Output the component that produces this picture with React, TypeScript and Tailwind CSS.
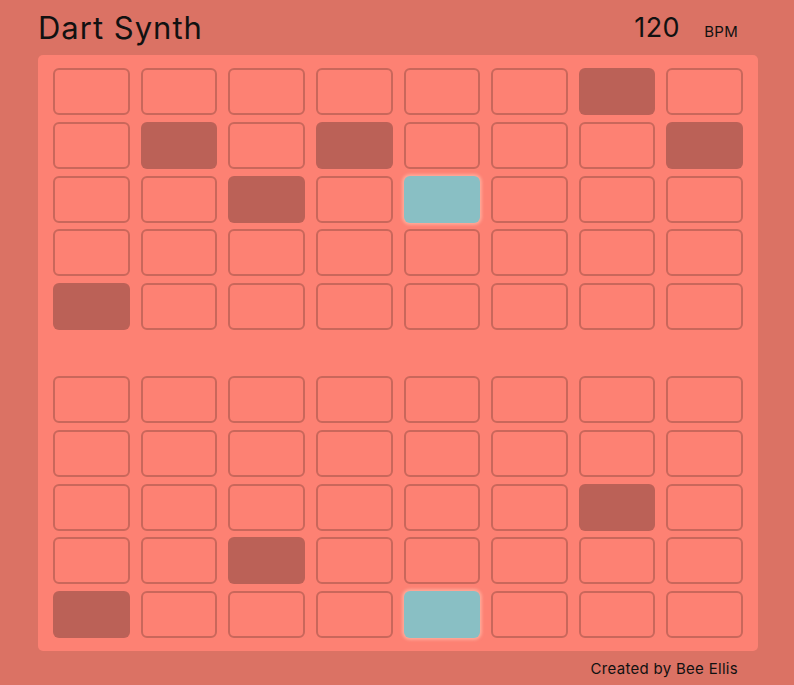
const block1: Record<string, "on" | "play"> = {
  "0-6": "on",
  "1-1": "on",
  "1-3": "on",
  "1-7": "on",
  "2-2": "on",
  "2-4": "play",
  "4-0": "on",
};

const block2: Record<string, "on" | "play"> = {
  "2-6": "on",
  "3-2": "on",
  "4-0": "on",
  "4-4": "play",
};

function Pad({ state }: { state?: "on" | "play" }) {
  if (state === "play") {
    return <div className="h-[47px] rounded-[6px] bg-[#89bfc4] shadow-[0_0_3px_2px_#ffa898]" />;
  }
  if (state === "on") {
    return <div className="h-[47px] rounded-[6px] bg-[#bb6157]" />;
  }
  return <div className="h-[47px] rounded-[6px] border-2 border-[#c9675b] bg-[#fd8173]" />;
}

function Block({ cells }: { cells: Record<string, "on" | "play"> }) {
  return (
    <div className="grid grid-cols-8 gap-x-[11px] gap-y-[6.75px]">
      {[...Array(5)].map((_, r) =>
        [...Array(8)].map((_, c) => <Pad key={`${r}-${c}`} state={cells[`${r}-${c}`]} />)
      )}
    </div>
  );
}

export default function App() {
  return (
    <div
      className="min-h-[685px] w-full bg-[#db7264] text-[#111]"
      style={{ fontFamily: 'Inter, "Noto Sans", sans-serif' }}
    >
      <div className="ml-[38px] w-[720px]">
        <header className="flex h-[55px] items-center justify-between pr-[20px]">
          <h1 className="text-[31px] leading-none tracking-[1px]">Dart Synth</h1>
          <div className="flex items-baseline gap-[24px]">
            <span className="text-[27px] leading-none tracking-[0.5px]">120</span>
            <span className="text-[15px] leading-none tracking-[0.3px]">BPM</span>
          </div>
        </header>
        <main className="flex flex-col gap-[46px] rounded-[5px] bg-[#fd8173] px-[15px] py-[13px]">
          <Block cells={block1} />
          <Block cells={block2} />
        </main>
        <footer className="flex justify-end pr-[20px] pt-[7px] text-[15px] tracking-[0.3px]">Created by Bee Ellis</footer>
      </div>
    </div>
  );
}
